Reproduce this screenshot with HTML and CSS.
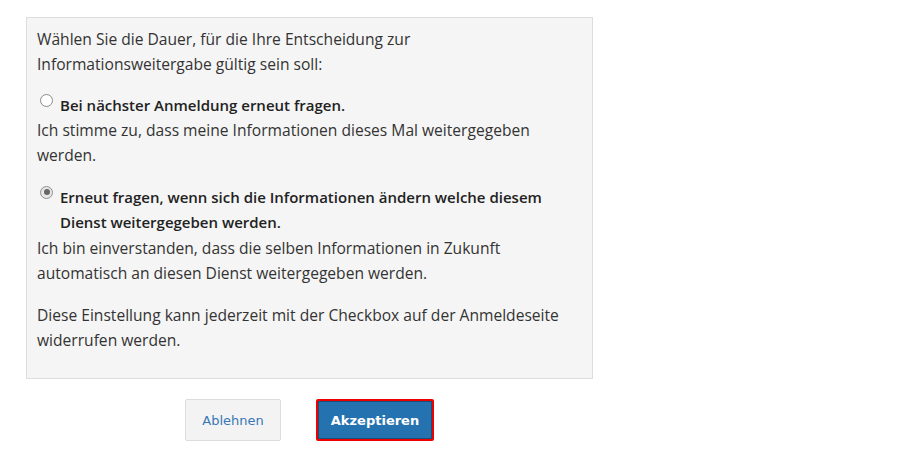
FILE: index.html
```html
<!DOCTYPE html>
<html lang="de">
<head>
    <meta charset="UTF-8">
    <title>Informationsweitergabe</title>
    <link rel="stylesheet" href="styles.css">
</head>
<body>

<div class="consent">
    <div class="consent-box">
        <p>Wählen Sie die Dauer, für die Ihre Entscheidung zur Informationsweitergabe gültig sein soll:</p>

        <div class="option">
            <label class="option-title">
                <input type="radio" name="duration" value="once">
                <span>Bei nächster Anmeldung erneut fragen.</span>
            </label>
            <div class="option-desc">Ich stimme zu, dass meine Informationen dieses Mal weitergegeben werden.</div>
        </div>

        <div class="option">
            <label class="option-title">
                <input type="radio" name="duration" value="changed" checked>
                <span>Erneut fragen, wenn sich die Informationen ändern welche diesem Dienst weitergegeben werden.</span>
            </label>
            <div class="option-desc">Ich bin einverstanden, dass die selben Informationen in Zukunft automatisch an diesen Dienst weitergegeben werden.</div>
        </div>

        <p>Diese Einstellung kann jederzeit mit der Checkbox auf der Anmeldeseite widerrufen werden.</p>
    </div>

    <div class="actions">
        <button class="btn btn-decline">Ablehnen</button>
        <button class="btn btn-accept">Akzeptieren</button>
    </div>
</div>

</body>
</html>
```

FILE: styles.css
```css
body {
    margin: 0;
    padding: 17px 26px;
    font-family: "Open Sans", "Noto Sans", sans-serif;
    font-size: 15.6px;
    color: #333;
    background: #fff;
}
.consent {
    width: 567px;
}
.consent-box {
    background: #f5f5f5;
    border: 1px solid #ddd;
    padding: 9px 10px 25px 10px;
    line-height: 25.3px;
}
.consent-box p {
    margin: 0 0 15px 0;
}
.consent-box p:last-child {
    margin-bottom: 0;
}
.option {
    margin-bottom: 16.5px;
}
.option-title {
    display: flex;
    align-items: flex-start;
    font-size: 15px;
    font-weight: 600;
    color: #222;
}
.option-title input {
    -webkit-appearance: none;
    appearance: none;
    box-sizing: border-box;
    margin: 0 7px 0 3px;
    width: 13px;
    height: 13px;
    flex-shrink: 0;
    border: 1px solid #8a8a8a;
    border-radius: 50%;
    background: #fff;
    position: relative;
    top: 1px;
}
.option-title input:checked {
    background: #e6e6e6;
    border-color: #909090;
}
.option-title input:checked::after {
    content: "";
    position: absolute;
    top: 2.5px;
    left: 2.5px;
    width: 6px;
    height: 6px;
    border-radius: 50%;
    background: #666;
}
.actions {
    display: flex;
    justify-content: center;
    gap: 35px;
    margin-top: 20px;
}
.btn {
    font-family: "DejaVu Sans", Verdana, sans-serif;
    font-size: 13px;
    height: 42px;
    border-radius: 2px;
    cursor: pointer;
}
.btn-decline {
    width: 96px;
    background: #f3f3f3;
    border: 1px solid #ddd;
    color: #3a77b5;
}
.btn-accept {
    width: 118px;
    background: #2472b0;
    border: 2px solid #e00;
    color: #fff;
    font-weight: bold;
    box-shadow: inset 0 0 0 1px #1a4f7a;
}
```
